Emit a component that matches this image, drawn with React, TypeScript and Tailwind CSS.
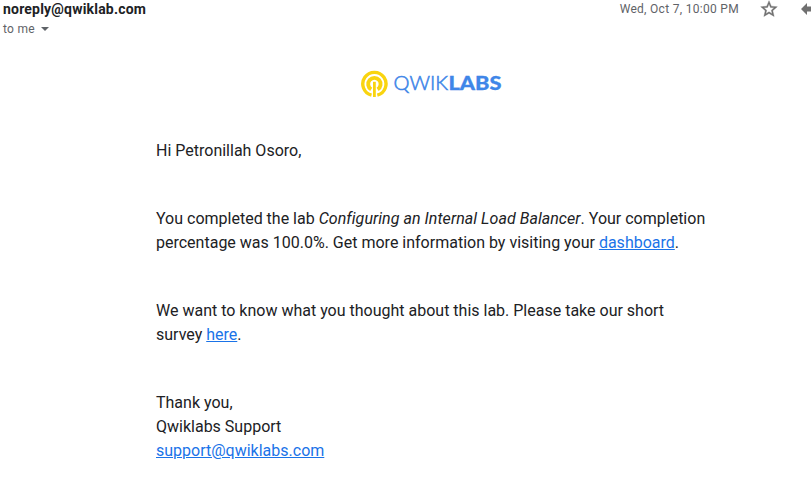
export default function App() {
  return (
    <div className="h-[493px] w-[811px] overflow-hidden bg-white font-[Roboto,sans-serif] text-[#202124]">
      <header className="flex h-[40px] justify-between">
        <div className="pl-[3px]">
          <div className="h-[19px] text-[14px] leading-[18px] font-bold tracking-[0.2px]">noreply@qwiklab.com</div>
          <div className="flex h-5 items-center text-[12px] leading-5 tracking-[0.3px] text-[#5f6368]">
            to me
            <svg className="ml-[6px]" width="8" height="4" viewBox="0 0 8 4"><path d="M0 0h8L4 4z" fill="#5f6368" /></svg>
          </div>
        </div>
        <div className="flex h-[18px] items-center text-[12px] tracking-[0.3px] text-[#5f6368]">
          <span>Wed, Oct 7, 10:00 PM</span>
          <svg className="ml-5 shrink-0" width="20" height="20" viewBox="0 0 24 24" fill="#707070" stroke="#707070" strokeWidth="0.4">
            <path d="M22 9.24l-7.19-.62L12 2 9.19 8.63 2 9.24l5.46 4.73L5.82 21 12 17.27 18.18 21l-1.63-7.03L22 9.24zM12 15.4l-3.76 2.27 1-4.28-3.32-2.88 4.38-.38L12 6.1l1.71 4.04 4.38.38-3.32 2.88 1 4.28L12 15.4z" />
          </svg>
          <svg className="ml-[19px] shrink-0" width="13" height="20" viewBox="0 0 13 20" fill="#707070">
            <path d="M9 7.5V4L3 10l6 6v-3.5H13v-5z" />
          </svg>
        </div>
      </header>
      <div className="flex h-[99px] justify-center pt-[28px]">
        <svg className="ml-[57px] shrink-0" width="148" height="32" viewBox="0 0 148 32">
          <g fill="none" stroke="#f9d40f">
            <path d="M11.5 27.2A11.6 11.6 0 1 1 17.3 27.2" strokeWidth="3.4" />
            <path d="M11.2 21.4A6.2 6.2 0 1 1 17.6 21.4" strokeWidth="3.9" />
            <path d="M14.4 13.8V29" strokeWidth="2.8" />
          </g>
          <text x="33.5" y="22" fontFamily="Lato" fontWeight="300" fontSize="19" fill="#3f86e8" stroke="#3f86e8" strokeWidth="0.55" textLength="54.5" lengthAdjust="spacingAndGlyphs">QWIK</text>
          <text x="88.5" y="22" fontFamily="Lato" fontWeight="900" fontSize="19" fill="#3f86e8" stroke="#3f86e8" strokeWidth="0.3" textLength="53" lengthAdjust="spacingAndGlyphs">LABS</text>
        </svg>
      </div>
      <main className="ml-[156px] w-[580px] text-[16px] leading-6">
        <p>Hi Petronillah Osoro,</p>
        <p className="mt-11">
          You completed the lab <em className="tracking-[0.05px]">Configuring an Internal Load Balancer</em>. Your completion<br />
          percentage was 100.0%. Get more information by visiting your <a className="text-[#1a73e8] underline">dashboard</a>.
        </p>
        <p className="mt-11">
          We want to know what you thought about this lab. Please take our short<br />
          survey <a className="text-[#1a73e8] underline">here</a>.
        </p>
        <p className="mt-11">
          Thank you,<br />Qwiklabs Support<br /><a className="text-[#1a73e8] underline">support@qwiklabs.com</a>
        </p>
      </main>
    </div>
  );
}
